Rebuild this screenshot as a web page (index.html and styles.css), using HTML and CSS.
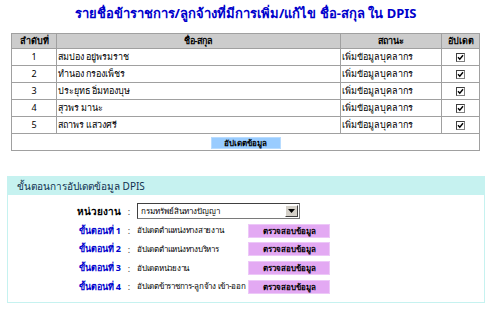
FILE: index.html
```html
<!DOCTYPE html>
<html lang="th">
<head>
<meta charset="UTF-8">
<title>DPIS</title>
<link rel="stylesheet" href="styles.css">
</head>
<body>
<h1 class="title">รายชื่อข้าราชการ/ลูกจ้างที่มีการเพิ่ม/แก้ไข ชื่อ-สกุล ใน DPIS</h1>

<table class="list">
	<tr>
		<th class="c-no">ลำดับที่</th>
		<th class="c-name">ชื่อ-สกุล</th>
		<th class="c-status">สถานะ</th>
		<th class="c-upd">อัปเดต</th>
	</tr>
	<tr>
		<td class="num">1</td>
		<td>สมปอง อยู่พรมราช</td>
		<td>เพิ่มข้อมูลบุคลากร</td>
		<td class="chk"><span class="box-chk"><svg viewBox="0 0 7 7" width="7" height="7"><path d="M1 3.2 L2.8 5.2 L6 1.2" fill="none" stroke="#000" stroke-width="1.4"/></svg></span></td>
	</tr>
	<tr>
		<td class="num">2</td>
		<td>ทำนอง กรองเพ็ชร</td>
		<td>เพิ่มข้อมูลบุคลากร</td>
		<td class="chk"><span class="box-chk"><svg viewBox="0 0 7 7" width="7" height="7"><path d="M1 3.2 L2.8 5.2 L6 1.2" fill="none" stroke="#000" stroke-width="1.4"/></svg></span></td>
	</tr>
	<tr>
		<td class="num">3</td>
		<td>ประยุทธ อิ่มทองบุษ</td>
		<td>เพิ่มข้อมูลบุคลากร</td>
		<td class="chk"><span class="box-chk"><svg viewBox="0 0 7 7" width="7" height="7"><path d="M1 3.2 L2.8 5.2 L6 1.2" fill="none" stroke="#000" stroke-width="1.4"/></svg></span></td>
	</tr>
	<tr>
		<td class="num">4</td>
		<td>สุวพร มานะ</td>
		<td>เพิ่มข้อมูลบุคลากร</td>
		<td class="chk"><span class="box-chk"><svg viewBox="0 0 7 7" width="7" height="7"><path d="M1 3.2 L2.8 5.2 L6 1.2" fill="none" stroke="#000" stroke-width="1.4"/></svg></span></td>
	</tr>
	<tr>
		<td class="num">5</td>
		<td>สถาพร แสวงศรี</td>
		<td>เพิ่มข้อมูลบุคลากร</td>
		<td class="chk"><span class="box-chk"><svg viewBox="0 0 7 7" width="7" height="7"><path d="M1 3.2 L2.8 5.2 L6 1.2" fill="none" stroke="#000" stroke-width="1.4"/></svg></span></td>
	</tr>
	<tr class="foot">
		<td colspan="4"><button class="btn-upd">อัปเดตข้อมูล</button></td>
	</tr>
</table>

<div class="steps">
	<div class="steps-head">ขั้นตอนการอัปเดตข้อมูล DPIS</div>
	<div class="steps-body">
		<div class="lbl">หน่วยงาน</div>
		<div class="colon">:</div>
		<div class="val">
			<span class="sel">
				<select class="dept"><option>กรมทรัพย์สินทางปัญญา</option></select>
				<span class="sel-arrow"><svg viewBox="0 0 7 4" width="7" height="4"><path d="M0 0 H7 L3.5 4 Z" fill="#000"/></svg></span>
			</span>
		</div>

		<div class="lbl step">ขั้นตอนที่ 1</div>
		<div class="colon">:</div>
		<div class="val"><span class="desc">อัปเดตตำแหน่งทางสายงาน</span><button class="btn-chk">ตรวจสอบข้อมูล</button></div>

		<div class="lbl step">ขั้นตอนที่ 2</div>
		<div class="colon">:</div>
		<div class="val"><span class="desc">อัปเดตตำแหน่งทางบริหาร</span><button class="btn-chk">ตรวจสอบข้อมูล</button></div>

		<div class="lbl step">ขั้นตอนที่ 3</div>
		<div class="colon">:</div>
		<div class="val"><span class="desc">อัปเดตหน่วยงาน</span><button class="btn-chk">ตรวจสอบข้อมูล</button></div>

		<div class="lbl step">ขั้นตอนที่ 4</div>
		<div class="colon">:</div>
		<div class="val"><span class="desc">อัปเดตข้าราชการ-ลูกจ้าง เข้า-ออก</span><button class="btn-chk">ตรวจสอบข้อมูล</button></div>
	</div>
</div>
</body>
</html>
```

FILE: styles.css
```css
body{
	margin: 0;
	font-family: Tahoma, "Noto Sans", sans-serif;
	font-size: 9px;
	color: #000;
	background: #fff;
}
.title{
	margin: 0;
	padding-top: 5px;
	width: 491px;
	text-align: center;
	font-size: 13px;
	line-height: 17px;
	font-weight: bold;
	color: #0000cc;
}
.list{
	margin: 11px 0 0 11px;
	width: 469px;
	border-collapse: collapse;
	border: 1px solid #a0a0a0;
}
.list th,
.list td{
	border: 1px solid #a0a0a0;
	padding: 0 1px;
	height: 16px;
	line-height: 14px;
}
.list th{
	background: #cccccc;
	font-weight: bold;
	height: 14px;
}
.list .c-no{ width: 42px; }
.list .c-status{ width: 98px; }
.list .c-upd{ width: 35px; }
.list .num{ text-align: center; }
.list .chk{ text-align: center; }
.box-chk{
	display: inline-block;
	width: 7px;
	height: 7px;
	border: 1px solid #808080;
	border-top-color: #404040;
	border-left-color: #404040;
	background: #fff;
	vertical-align: middle;
	line-height: 0;
}
.list .foot td{
	text-align: center;
	height: 16px;
	padding: 0;
}
.btn-upd{
	font-family: inherit;
	font-size: 8px;
	font-weight: bold;
	color: #000;
	background: #99ccff;
	border: 1px solid #b8dcff;
	height: 12px;
	width: 70px;
	padding: 0;
	line-height: 10px;
	vertical-align: middle;
}

.steps{
	margin: 25px 0 0 7px;
	width: 476px;
	border: 1px solid #c6f2f0;
}
.steps-head{
	background: #c6f2f0;
	height: 18px;
	line-height: 18px;
	padding-left: 9px;
	font-size: 10px;
	color: #10304e;
}
.steps-body{
	display: grid;
	grid-template-columns: 113px 16px 1fr;
	grid-auto-rows: 14px;
	grid-template-rows: 16px;
	row-gap: 4.7px;
	padding: 8px 0 8px 0;
	align-items: center;
}
.lbl{
	text-align: right;
	font-weight: bold;
	font-size: 10px;
}
.lbl.step{
	color: #0000cc;
	font-size: 9px;
}
.colon{
	text-align: center;
	color: #444;
}
.val{
	display: flex;
	align-items: center;
}
.desc{
	width: 111px;
	white-space: nowrap;
	font-size: 8px;
	letter-spacing: -0.25px;
}
.btn-chk{
	font-family: inherit;
	font-size: 8px;
	font-weight: bold;
	color: #000;
	background: #e3a9f3;
	border: 1px solid #edc8f8;
	height: 14px;
	width: 82px;
	padding: 0;
	line-height: 12px;
}
.sel{
	position: relative;
	display: inline-block;
}
.dept{
	appearance: none;
	-webkit-appearance: none;
	width: 163px;
	height: 16px;
	font-family: inherit;
	font-size: 8px;
	padding: 0 0 0 3px;
	border: 1px solid #7a7a7a;
	border-top-color: #404040;
	border-left-color: #404040;
	background: #fff;
	color: #000;
	border-radius: 0;
	line-height: 14px;
}
.sel-arrow{
	position: absolute;
	right: 2px;
	top: 2px;
	width: 11px;
	height: 10px;
	background: #d4d0c8;
	border: 1px solid #fff;
	border-right-color: #404040;
	border-bottom-color: #404040;
	display: flex;
	align-items: center;
	justify-content: center;
}
```
